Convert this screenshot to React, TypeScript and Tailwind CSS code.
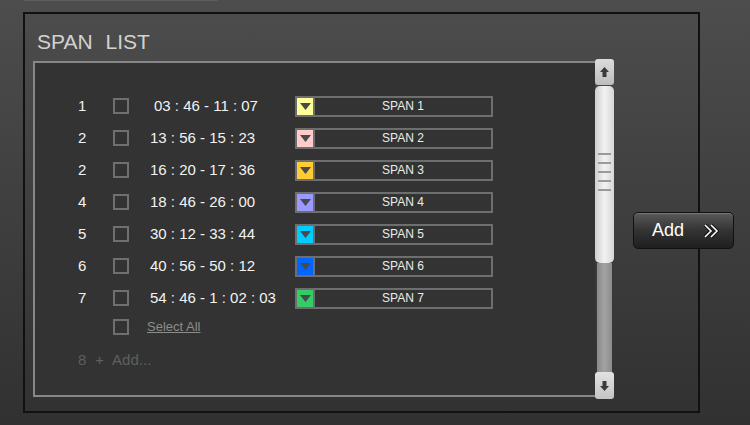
const rows = [
  { n: "1", time: "03 : 46 - 11 : 07", shift: true, color: "#ffff99", label: "SPAN 1" },
  { n: "2", time: "13 : 56 - 15 : 23", shift: false, color: "#ffcccc", label: "SPAN 2" },
  { n: "2", time: "16 : 20 - 17 : 36", shift: false, color: "#ffcc33", label: "SPAN 3" },
  { n: "4", time: "18 : 46 - 26 : 00", shift: false, color: "#9999ff", label: "SPAN 4" },
  { n: "5", time: "30 : 12 - 33 : 44", shift: false, color: "#00ccff", label: "SPAN 5" },
  { n: "6", time: "40 : 56 - 50 : 12", shift: false, color: "#0066ff", label: "SPAN 6" },
  { n: "7", time: "54 : 46 - 1 : 02 : 03", shift: false, color: "#33cc66", label: "SPAN 7" },
];

const Arrow = ({ down }: { down?: boolean }) => (
  <svg width="9" height="10" viewBox="0 0 9 10" className={down ? "rotate-180" : ""}>
    <path d="M4.5 0 L9 5 H6.5 V10 H2.5 V5 H0 Z" fill="#3a3a3a" />
  </svg>
);

const Checkbox = () => <div className="w-[16px] h-[16px] border-2 border-[#6f6f6f] shrink-0" />;

export default function App() {
  return (
    <div
      className="relative w-[750px] h-[425px] overflow-hidden bg-gradient-to-b from-[#4d4d4d] to-[#313131]"
      style={{ fontFamily: '"Liberation Sans", Arial, sans-serif' }}
    >
      <div className="absolute left-[24px] top-0 w-[194px] h-px bg-[#5c5c5c]" />

      <div className="ml-[23px] mt-[12px] w-[677px] h-[401px] border-2 border-[#111]">
        <div className="h-[47px] pt-[17px] pl-[12px] text-[21px] leading-[21px] text-[#d2d2d2] [word-spacing:7px]">
          SPAN LIST
        </div>

        <div className="ml-[8px] w-[581px] h-[336px] flex">
          <div className="flex-1 border-t-2 border-l-2 border-b-2 border-[#878787] bg-[#333] pt-[27px] pl-[43px]">
            {rows.map((r, i) => (
              <div key={i} className="flex items-center h-[32px]">
                <div className="w-[35px] text-[15px] text-[#f2f2f2]">{r.n}</div>
                <Checkbox />
                <div className={`ml-[21px] w-[145px] text-[15px] text-[#f2f2f2] whitespace-pre ${r.shift ? "pl-[4px]" : ""}`}>
                  {r.time}
                </div>
                <div className="flex w-[198px] h-[21px] border-2 border-[#6e6e6e]">
                  <div
                    className="w-[18px] h-full flex items-center justify-center border-r-2 border-[#6e6e6e]"
                    style={{ backgroundColor: r.color }}
                  >
                    <svg width="11" height="7" viewBox="0 0 11 7">
                      <path d="M0 0 H11 L5.5 7 Z" fill="#4a4a4a" />
                    </svg>
                  </div>
                  <div className="flex-1 flex items-center justify-center text-[12px] text-[#ececec]">{r.label}</div>
                </div>
              </div>
            ))}
            <div className="flex items-center h-[26px]">
              <div className="w-[35px]" />
              <Checkbox />
              <span className="ml-[18px] text-[13px] text-[#8c8c8c] underline">Select All</span>
            </div>
            <div className="flex items-center h-[26px] mt-[7px] text-[15px] text-[#5f5f5f]">
              <span>8</span>
              <span className="ml-[9px]">+</span>
              <span className="ml-[8px]">Add...</span>
            </div>
          </div>

          <div className="w-[19px] -my-[2px] h-[340px] flex flex-col">
            <div className="h-[26px] rounded-[3px] bg-gradient-to-b from-[#dcdcdc] to-[#bdbdbd] flex items-center justify-center">
              <Arrow />
            </div>
            <div className="mt-px h-[177px] rounded-[5px] bg-gradient-to-r from-[#cfcfcf] via-[#f2f2f2] to-[#d6d6d6] flex flex-col items-center justify-center gap-[7px] pb-[6px]">
              {[0, 1, 2, 3, 4].map((k) => (
                <div key={k} className="w-[13px] h-[2px] bg-[#9a9a9a]" />
              ))}
            </div>
            <div className="mx-[2px] h-[109px] bg-gradient-to-r from-[#8a8a8a] via-[#a2a2a2] to-[#8c8c8c]" />
            <div className="h-[27px] rounded-[3px] bg-gradient-to-b from-[#e2e2e2] to-[#c4c4c4] flex items-center justify-center">
              <Arrow down />
            </div>
          </div>
        </div>
      </div>

      <button className="absolute left-[633px] top-[212px] w-[101px] h-[37px] rounded-[5px] border border-[#111] bg-gradient-to-b from-[#5a5a5a] via-[#333] to-[#1f1f1f] flex items-center pl-[18px] gap-[19px] text-[18px] text-white shadow-[inset_0_1px_0_#777]">
        <span>Add</span>
        <svg width="16" height="16" viewBox="0 0 16 16">
          <path d="M2 2 L8 8 L2 14 M8 2 L14 8 L8 14" fill="none" stroke="#111" strokeWidth="3.5" />
          <path d="M2 2 L8 8 L2 14 M8 2 L14 8 L8 14" fill="none" stroke="#fff" strokeWidth="1.6" />
        </svg>
      </button>
    </div>
  );
}
